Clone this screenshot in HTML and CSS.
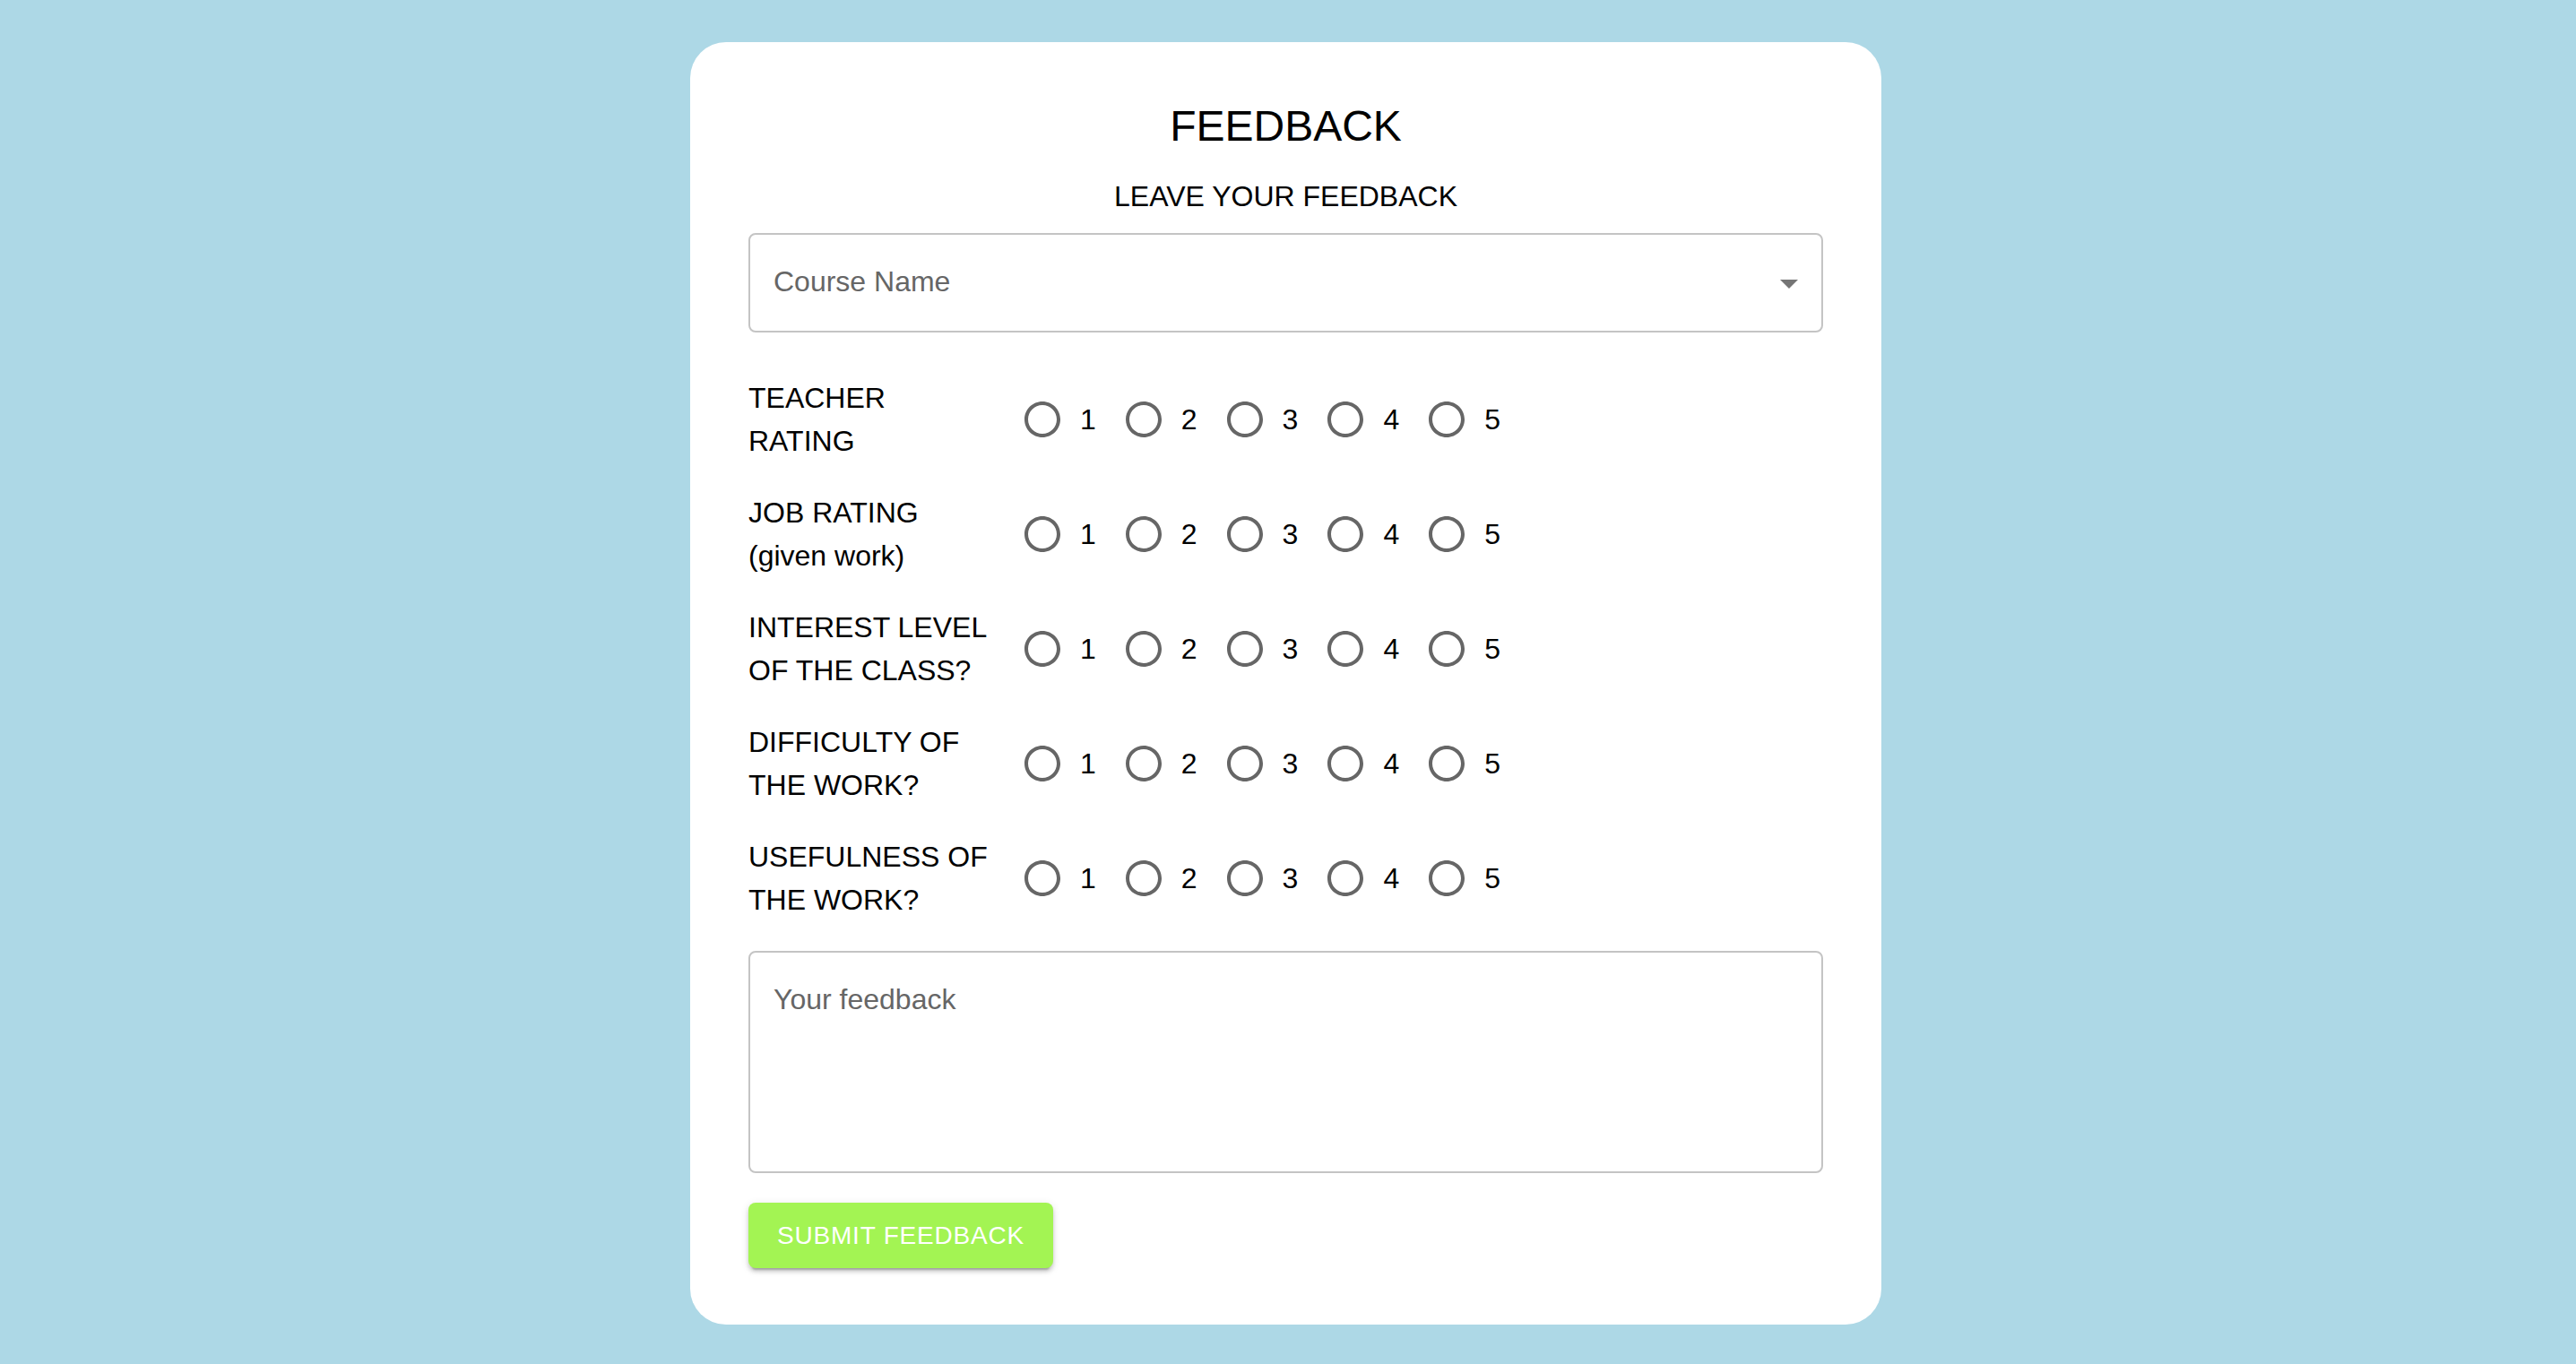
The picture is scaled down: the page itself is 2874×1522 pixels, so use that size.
FILE: index.html
```html
<!DOCTYPE html>
<html lang="en">
<head>
<meta charset="utf-8">
<title>Feedback</title>
<link rel="stylesheet" href="styles.css">
</head>
<body>
<div class="page">
  <form class="card">
    <h1 class="title">FEEDBACK</h1>
    <p class="subtitle">LEAVE YOUR FEEDBACK</p>
    <div class="select">
      <span class="select-label">Course Name</span>
      <svg class="arrow" viewBox="0 0 24 24" width="48" height="48"><path d="M7 10l5 5 5-5z"/></svg>
    </div>

    <div class="row first">
      <div class="q">TEACHER<br>RATING</div>
      <div class="group">
        <label class="opt"><span class="radio"><svg viewBox="0 0 24 24"><path d="M12 2C6.48 2 2 6.48 2 12s4.48 10 10 10 10-4.48 10-10S17.52 2 12 2zm0 18c-4.42 0-8-3.58-8-8s3.58-8 8-8 8 3.58 8 8-3.58 8-8 8z"/></svg></span><span class="num">1</span></label>
        <label class="opt"><span class="radio"><svg viewBox="0 0 24 24"><path d="M12 2C6.48 2 2 6.48 2 12s4.48 10 10 10 10-4.48 10-10S17.52 2 12 2zm0 18c-4.42 0-8-3.58-8-8s3.58-8 8-8 8 3.58 8 8-3.58 8-8 8z"/></svg></span><span class="num">2</span></label>
        <label class="opt"><span class="radio"><svg viewBox="0 0 24 24"><path d="M12 2C6.48 2 2 6.48 2 12s4.48 10 10 10 10-4.48 10-10S17.52 2 12 2zm0 18c-4.42 0-8-3.58-8-8s3.58-8 8-8 8 3.58 8 8-3.58 8-8 8z"/></svg></span><span class="num">3</span></label>
        <label class="opt"><span class="radio"><svg viewBox="0 0 24 24"><path d="M12 2C6.48 2 2 6.48 2 12s4.48 10 10 10 10-4.48 10-10S17.52 2 12 2zm0 18c-4.42 0-8-3.58-8-8s3.58-8 8-8 8 3.58 8 8-3.58 8-8 8z"/></svg></span><span class="num">4</span></label>
        <label class="opt"><span class="radio"><svg viewBox="0 0 24 24"><path d="M12 2C6.48 2 2 6.48 2 12s4.48 10 10 10 10-4.48 10-10S17.52 2 12 2zm0 18c-4.42 0-8-3.58-8-8s3.58-8 8-8 8 3.58 8 8-3.58 8-8 8z"/></svg></span><span class="num">5</span></label>
      </div>
    </div>

    <div class="row">
      <div class="q">JOB RATING<br>(given work)</div>
      <div class="group">
        <label class="opt"><span class="radio"><svg viewBox="0 0 24 24"><path d="M12 2C6.48 2 2 6.48 2 12s4.48 10 10 10 10-4.48 10-10S17.52 2 12 2zm0 18c-4.42 0-8-3.58-8-8s3.58-8 8-8 8 3.58 8 8-3.58 8-8 8z"/></svg></span><span class="num">1</span></label>
        <label class="opt"><span class="radio"><svg viewBox="0 0 24 24"><path d="M12 2C6.48 2 2 6.48 2 12s4.48 10 10 10 10-4.48 10-10S17.52 2 12 2zm0 18c-4.42 0-8-3.58-8-8s3.58-8 8-8 8 3.58 8 8-3.58 8-8 8z"/></svg></span><span class="num">2</span></label>
        <label class="opt"><span class="radio"><svg viewBox="0 0 24 24"><path d="M12 2C6.48 2 2 6.48 2 12s4.48 10 10 10 10-4.48 10-10S17.52 2 12 2zm0 18c-4.42 0-8-3.58-8-8s3.58-8 8-8 8 3.58 8 8-3.58 8-8 8z"/></svg></span><span class="num">3</span></label>
        <label class="opt"><span class="radio"><svg viewBox="0 0 24 24"><path d="M12 2C6.48 2 2 6.48 2 12s4.48 10 10 10 10-4.48 10-10S17.52 2 12 2zm0 18c-4.42 0-8-3.58-8-8s3.58-8 8-8 8 3.58 8 8-3.58 8-8 8z"/></svg></span><span class="num">4</span></label>
        <label class="opt"><span class="radio"><svg viewBox="0 0 24 24"><path d="M12 2C6.48 2 2 6.48 2 12s4.48 10 10 10 10-4.48 10-10S17.52 2 12 2zm0 18c-4.42 0-8-3.58-8-8s3.58-8 8-8 8 3.58 8 8-3.58 8-8 8z"/></svg></span><span class="num">5</span></label>
      </div>
    </div>

    <div class="row">
      <div class="q">INTEREST LEVEL<br>OF THE CLASS?</div>
      <div class="group">
        <label class="opt"><span class="radio"><svg viewBox="0 0 24 24"><path d="M12 2C6.48 2 2 6.48 2 12s4.48 10 10 10 10-4.48 10-10S17.52 2 12 2zm0 18c-4.42 0-8-3.58-8-8s3.58-8 8-8 8 3.58 8 8-3.58 8-8 8z"/></svg></span><span class="num">1</span></label>
        <label class="opt"><span class="radio"><svg viewBox="0 0 24 24"><path d="M12 2C6.48 2 2 6.48 2 12s4.48 10 10 10 10-4.48 10-10S17.52 2 12 2zm0 18c-4.42 0-8-3.58-8-8s3.58-8 8-8 8 3.58 8 8-3.58 8-8 8z"/></svg></span><span class="num">2</span></label>
        <label class="opt"><span class="radio"><svg viewBox="0 0 24 24"><path d="M12 2C6.48 2 2 6.48 2 12s4.48 10 10 10 10-4.48 10-10S17.52 2 12 2zm0 18c-4.42 0-8-3.58-8-8s3.58-8 8-8 8 3.58 8 8-3.58 8-8 8z"/></svg></span><span class="num">3</span></label>
        <label class="opt"><span class="radio"><svg viewBox="0 0 24 24"><path d="M12 2C6.48 2 2 6.48 2 12s4.48 10 10 10 10-4.48 10-10S17.52 2 12 2zm0 18c-4.42 0-8-3.58-8-8s3.58-8 8-8 8 3.58 8 8-3.58 8-8 8z"/></svg></span><span class="num">4</span></label>
        <label class="opt"><span class="radio"><svg viewBox="0 0 24 24"><path d="M12 2C6.48 2 2 6.48 2 12s4.48 10 10 10 10-4.48 10-10S17.52 2 12 2zm0 18c-4.42 0-8-3.58-8-8s3.58-8 8-8 8 3.58 8 8-3.58 8-8 8z"/></svg></span><span class="num">5</span></label>
      </div>
    </div>

    <div class="row">
      <div class="q">DIFFICULTY OF<br>THE WORK?</div>
      <div class="group">
        <label class="opt"><span class="radio"><svg viewBox="0 0 24 24"><path d="M12 2C6.48 2 2 6.48 2 12s4.48 10 10 10 10-4.48 10-10S17.52 2 12 2zm0 18c-4.42 0-8-3.58-8-8s3.58-8 8-8 8 3.58 8 8-3.58 8-8 8z"/></svg></span><span class="num">1</span></label>
        <label class="opt"><span class="radio"><svg viewBox="0 0 24 24"><path d="M12 2C6.48 2 2 6.48 2 12s4.48 10 10 10 10-4.48 10-10S17.52 2 12 2zm0 18c-4.42 0-8-3.58-8-8s3.58-8 8-8 8 3.58 8 8-3.58 8-8 8z"/></svg></span><span class="num">2</span></label>
        <label class="opt"><span class="radio"><svg viewBox="0 0 24 24"><path d="M12 2C6.48 2 2 6.48 2 12s4.48 10 10 10 10-4.48 10-10S17.52 2 12 2zm0 18c-4.42 0-8-3.58-8-8s3.58-8 8-8 8 3.58 8 8-3.58 8-8 8z"/></svg></span><span class="num">3</span></label>
        <label class="opt"><span class="radio"><svg viewBox="0 0 24 24"><path d="M12 2C6.48 2 2 6.48 2 12s4.48 10 10 10 10-4.48 10-10S17.52 2 12 2zm0 18c-4.42 0-8-3.58-8-8s3.58-8 8-8 8 3.58 8 8-3.58 8-8 8z"/></svg></span><span class="num">4</span></label>
        <label class="opt"><span class="radio"><svg viewBox="0 0 24 24"><path d="M12 2C6.48 2 2 6.48 2 12s4.48 10 10 10 10-4.48 10-10S17.52 2 12 2zm0 18c-4.42 0-8-3.58-8-8s3.58-8 8-8 8 3.58 8 8-3.58 8-8 8z"/></svg></span><span class="num">5</span></label>
      </div>
    </div>

    <div class="row">
      <div class="q">USEFULNESS OF<br>THE WORK?</div>
      <div class="group">
        <label class="opt"><span class="radio"><svg viewBox="0 0 24 24"><path d="M12 2C6.48 2 2 6.48 2 12s4.48 10 10 10 10-4.48 10-10S17.52 2 12 2zm0 18c-4.42 0-8-3.58-8-8s3.58-8 8-8 8 3.58 8 8-3.58 8-8 8z"/></svg></span><span class="num">1</span></label>
        <label class="opt"><span class="radio"><svg viewBox="0 0 24 24"><path d="M12 2C6.48 2 2 6.48 2 12s4.48 10 10 10 10-4.48 10-10S17.52 2 12 2zm0 18c-4.42 0-8-3.58-8-8s3.58-8 8-8 8 3.58 8 8-3.58 8-8 8z"/></svg></span><span class="num">2</span></label>
        <label class="opt"><span class="radio"><svg viewBox="0 0 24 24"><path d="M12 2C6.48 2 2 6.48 2 12s4.48 10 10 10 10-4.48 10-10S17.52 2 12 2zm0 18c-4.42 0-8-3.58-8-8s3.58-8 8-8 8 3.58 8 8-3.58 8-8 8z"/></svg></span><span class="num">3</span></label>
        <label class="opt"><span class="radio"><svg viewBox="0 0 24 24"><path d="M12 2C6.48 2 2 6.48 2 12s4.48 10 10 10 10-4.48 10-10S17.52 2 12 2zm0 18c-4.42 0-8-3.58-8-8s3.58-8 8-8 8 3.58 8 8-3.58 8-8 8z"/></svg></span><span class="num">4</span></label>
        <label class="opt"><span class="radio"><svg viewBox="0 0 24 24"><path d="M12 2C6.48 2 2 6.48 2 12s4.48 10 10 10 10-4.48 10-10S17.52 2 12 2zm0 18c-4.42 0-8-3.58-8-8s3.58-8 8-8 8 3.58 8 8-3.58 8-8 8z"/></svg></span><span class="num">5</span></label>
      </div>
    </div>

    <textarea class="feedback" placeholder="Your feedback"></textarea>
    <button type="button" class="submit">SUBMIT FEEDBACK</button>
  </form>
</div>
</body>
</html>
```

FILE: styles.css
```css
* { box-sizing: border-box; }

html, body {
  margin: 0;
  padding: 0;
  background: #add8e6;
  font-family: "Liberation Sans", Arial, sans-serif;
  color: #000;
}

.page {
  display: flex;
  justify-content: center;
  padding: 47px 5px 44px 0;
}

.card {
  width: 1329px;
  background: #fff;
  border-radius: 40px;
  padding: 62px 65px 63px 65px;
  display: flex;
  flex-direction: column;
}

.title {
  margin: 0;
  font-size: 48px;
  line-height: 64px;
  font-weight: 400;
  text-align: center;
}

.subtitle {
  margin: 22px 0 0;
  font-size: 32px;
  line-height: 48px;
  text-align: center;
}

.select {
  margin-top: 17px;
  height: 111px;
  border: 2px solid #c4c4c4;
  border-radius: 8px;
  display: flex;
  align-items: center;
  justify-content: space-between;
  padding: 0 12px 4px 26px;
}

.select-label {
  font-size: 32px;
  line-height: 46px;
  color: #666;
}

.arrow {
  fill: #757575;
  display: block;
  margin-top: 4px;
}

.row {
  display: flex;
  align-items: center;
  height: 96px;
  margin-top: 32px;
}

.row.first {
  margin-top: 49px;
}

.q {
  width: 280px;
  margin-right: 28px;
  flex-shrink: 0;
  font-size: 32px;
  line-height: 48px;
}

.group {
  display: flex;
  align-items: center;
}

.opt {
  display: flex;
  align-items: center;
  margin-left: -22px;
  margin-right: 33px;
}

.radio {
  padding: 18px;
  display: flex;
}

.radio svg {
  width: 48px;
  height: 48px;
  fill: #666;
  display: block;
}

.num {
  font-size: 32px;
  line-height: 48px;
}

.feedback {
  margin-top: 33px;
  height: 248px;
  width: 100%;
  border: 2px solid #c4c4c4;
  border-radius: 8px;
  padding: 29px 26px;
  font-family: "Liberation Sans", Arial, sans-serif;
  font-size: 32px;
  line-height: 46px;
  resize: none;
  outline: none;
  color: #000;
}

.feedback::placeholder {
  color: #666;
  opacity: 1;
}

.submit {
  align-self: flex-start;
  margin-top: 33px;
  height: 73px;
  padding: 0 32px;
  border: none;
  border-radius: 8px;
  background: #a3f453;
  color: #fff;
  font-family: "Liberation Sans", Arial, sans-serif;
  font-size: 28px;
  letter-spacing: 0.8px;
  box-shadow: 0 6px 2px -4px rgba(0,0,0,0.2), 0 4px 4px 0 rgba(0,0,0,0.14), 0 2px 10px 0 rgba(0,0,0,0.12);
  cursor: pointer;
}
```
